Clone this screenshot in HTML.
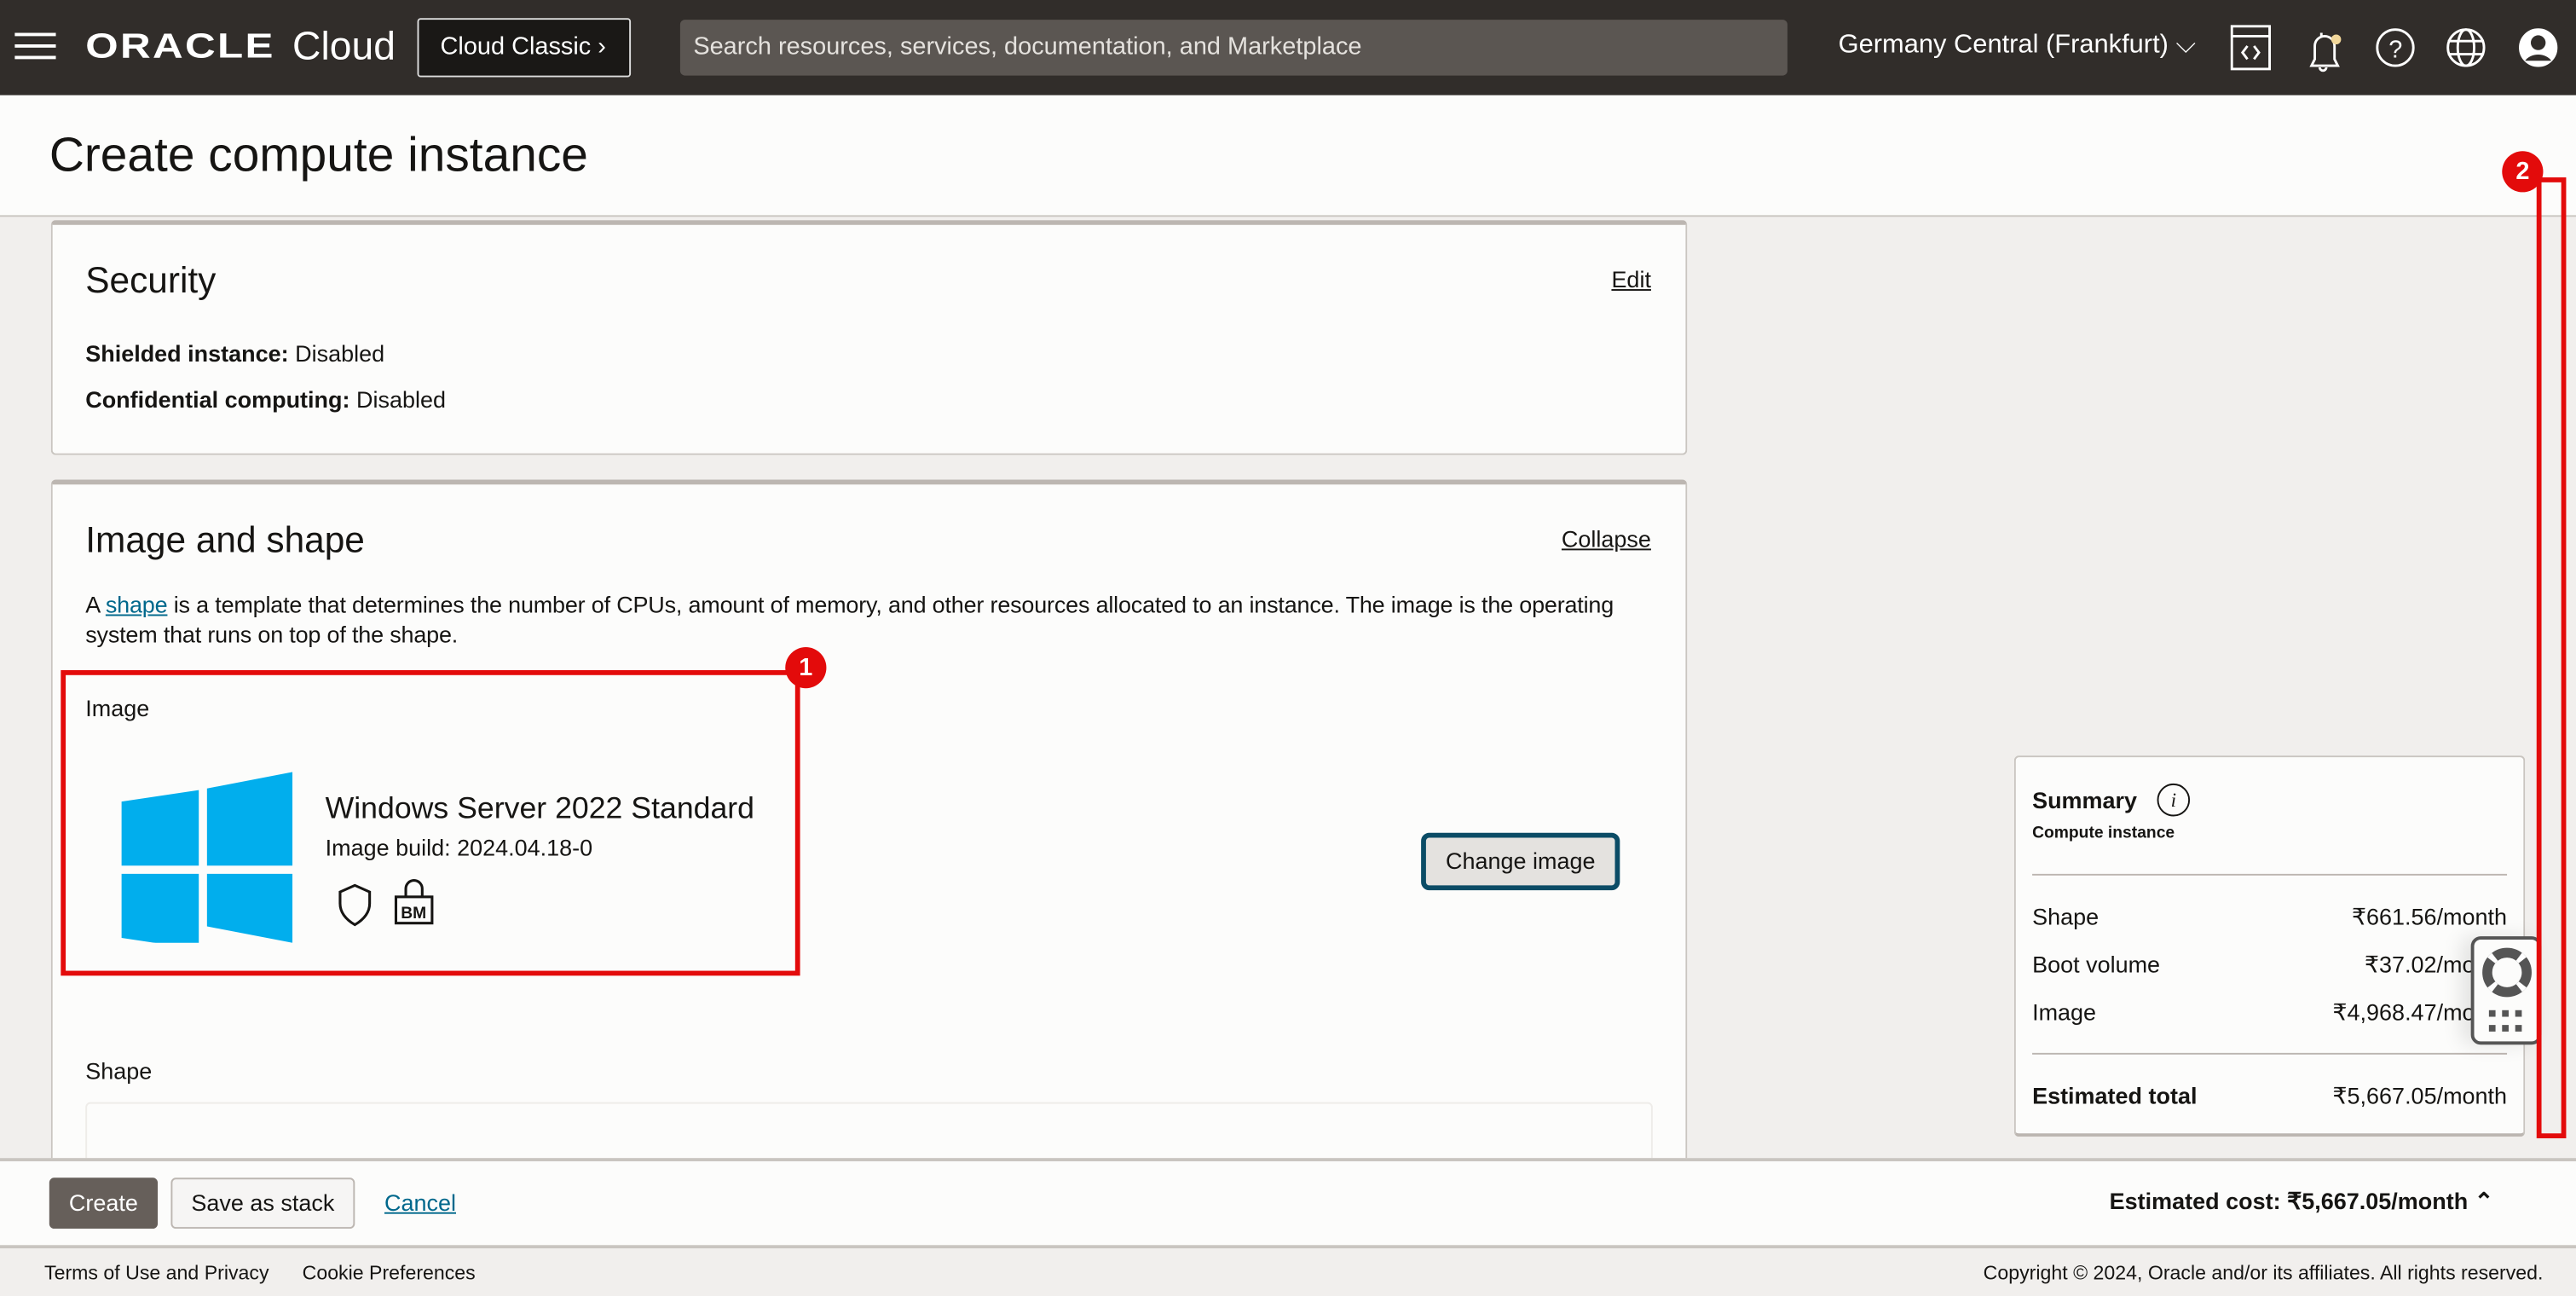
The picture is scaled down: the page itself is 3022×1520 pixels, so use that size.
<!DOCTYPE html>
<html><head><meta charset="utf-8"><style>
*{box-sizing:border-box;margin:0;padding:0}
html,body{width:3022px;height:1520px;overflow:hidden;background:#f1efed}
#s{position:absolute;left:0;top:0;width:1568px;height:789px;transform:scale(1.92730,1.92649);transform-origin:0 0;font-family:"Liberation Sans",sans-serif;color:#161513;background:#f1efed}
.a{position:absolute}
.hdr{left:0;top:0;width:1568px;height:58px;background:#312d2a}
.card{background:#fcfcfb;border:1px solid #c9c5c0;border-top:3px solid #bcb6b1;border-radius:3px}
u{text-decoration:underline}
</style></head><body><div id="s">
<div class="a hdr">
 <div class="a" style="left:9px;top:20px;width:25px;height:2px;background:#fff;box-shadow:0 7px 0 #fff,0 14px 0 #fff"></div>
 <div class="a" style="left:52px;top:17px;color:#fff;font-size:21px;font-weight:bold;letter-spacing:1px;transform:scaleX(1.22);transform-origin:0 0">ORACLE</div>
 <div class="a" style="left:178px;top:15px;color:#fff;font-size:24px">Cloud</div>
 <div class="a" style="left:254px;top:11px;width:130px;height:36px;background:#1a1816;border:1px solid #ddd;border-radius:2px;color:#fff;font-size:15px;line-height:34px;padding-left:13px">Cloud Classic ›</div>
 <div class="a" style="left:414px;top:12px;width:674px;height:34px;background:#5b5652;border-radius:3px;color:#e5e2de;font-size:15px;line-height:34px;padding-left:8px">Search resources, services, documentation, and Marketplace</div>
 <div class="a" style="left:1119px;top:19px;color:#fff;font-size:16px">Germany Central (Frankfurt) ⌵</div>
 <svg class="a" style="left:1350px;top:12px" width="215" height="34" viewBox="0 0 215 34" fill="none" stroke="#fff" stroke-width="1.5">
  <rect x="8.5" y="4" width="23" height="26"/><line x1="8.5" y1="10" x2="31.5" y2="10"/><path d="M18 16l-3 4 3 4M22 16l3 4-3 4"/>
  <path d="M57 28h16l-2-4v-8a6 6 0 0 0-12 0v8z M63 8v2 M62 29a2 2 0 0 0 4 0"/><circle cx="72" cy="12" r="3" fill="#f2d79a" stroke="none"/>
  <circle cx="108" cy="17" r="11"/><text x="104" y="23" fill="#fff" stroke="none" font-size="15" font-family="Liberation Sans">?</text>
  <circle cx="151" cy="17" r="11"/><ellipse cx="151" cy="17" rx="5" ry="11"/><line x1="140" y1="13" x2="162" y2="13"/><line x1="140" y1="21" x2="162" y2="21"/>
  <circle cx="195" cy="17" r="11" fill="#fff"/><circle cx="195" cy="14" r="4.5" fill="#312d2a" stroke="none"/><path d="M187 25a9 7 0 0 1 16 0" fill="#312d2a" stroke="none"/>
 </svg>
</div>
<div class="a" style="left:0;top:58px;width:1568px;height:74px;background:#fcfcfb;border-bottom:1px solid #c9c5c0"></div>
<div class="a" style="left:30px;top:78px;font-size:29.5px">Create compute instance</div>

<div class="a card" style="left:31px;top:134px;width:996px;height:143px">
 <div class="a" style="left:20px;top:21px;font-size:22px">Security</div>
 <div class="a" style="right:21px;top:25px;font-size:14px"><u>Edit</u></div>
 <div class="a" style="left:20px;top:70px;font-size:14px"><b>Shielded instance:</b> Disabled</div>
 <div class="a" style="left:20px;top:98px;font-size:14px"><b>Confidential computing:</b> Disabled</div>
</div>
<div class="a card" style="left:31px;top:292px;width:996px;height:430px">
 <div class="a" style="left:20px;top:21px;font-size:22px">Image and shape</div>
 <div class="a" style="right:21px;top:25px;font-size:14px"><u>Collapse</u></div>
 <div class="a" style="left:20px;top:64px;width:935px;font-size:14px;line-height:18px;letter-spacing:-0.1px">A <u style="color:#00688c">shape</u> is a template that determines the number of CPUs, amount of memory, and other resources allocated to an instance. The image is the operating system that runs on top of the shape.</div>
 <div class="a" style="left:20px;top:128px;font-size:14px">Image</div>
 <svg class="a" style="left:41px;top:175px" width="106" height="104" viewBox="0 0 106 104" fill="#01aeed"><path d="M1 18L48 11V57H1z M53 10L105 0V57H53z M1 62H48V108L1 101z M53 62H105V104L53 94z"/></svg>
 <div class="a" style="left:166px;top:186px;font-size:18.5px">Windows Server 2022 Standard</div>
 <div class="a" style="left:166px;top:213px;font-size:14px">Image build: 2024.04.18-0</div>
 <svg class="a" style="left:172px;top:240px" width="65" height="30" viewBox="0 0 65 30" fill="none" stroke="#161513" stroke-width="1.6"><path d="M12 4l-9 4v7c0 6 4 10 9 13 5-3 9-7 9-13V8z"/><rect x="37" y="11" width="22" height="16"/><path d="M43 11V6a5 5 0 0 1 10 0v5"/><text x="40" y="24" font-size="10" font-family="Liberation Sans" fill="#161513" stroke="none" font-weight="bold">BM</text></svg>
 <div class="a" style="left:833px;top:212px;width:121px;height:35px;background:#e4e2df;border:3px solid #0b4c66;border-radius:5px;font-size:14px;text-align:center;line-height:29px">Change image</div>
 <div class="a" style="left:20px;top:349px;font-size:14px">Shape</div>
 <div class="a" style="left:20px;top:376px;width:954px;height:60px;border:1px solid #eeece9;border-radius:3px"></div>
</div>

<div class="a" style="left:1226px;top:460px;width:311px;height:232px;background:#fcfcfb;border:1px solid #c9c5c0;border-bottom:2px solid #bcb6b1;border-radius:3px">
 <div class="a" style="left:10px;top:18px;font-size:14px;font-weight:bold">Summary</div>
 <div class="a" style="left:86px;top:16px;width:20px;height:20px;border:1.3px solid #161513;border-radius:50%;font-size:12px;font-style:italic;font-family:'Liberation Serif',serif;text-align:center;line-height:18px">i</div>
 <div class="a" style="left:10px;top:41px;font-size:10px;font-weight:bold">Compute instance</div>
 <div class="a" style="left:10px;top:71px;width:289px;height:1px;background:#bcb6b1"></div>
 <div class="a" style="left:10px;top:89px;font-size:14px">Shape</div><div class="a" style="right:10px;top:89px;font-size:14px">₹661.56/month</div>
 <div class="a" style="left:10px;top:118px;font-size:14px">Boot volume</div><div class="a" style="right:10px;top:118px;font-size:14px">₹37.02/month</div>
 <div class="a" style="left:10px;top:147px;font-size:14px">Image</div><div class="a" style="right:10px;top:147px;font-size:14px">₹4,968.47/month</div>
 <div class="a" style="left:10px;top:180px;width:289px;height:1px;background:#bcb6b1"></div>
 <div class="a" style="left:10px;top:198px;font-size:14px;font-weight:bold">Estimated total</div><div class="a" style="right:10px;top:198px;font-size:14px">₹5,667.05/month</div>
</div>
<div class="a" style="left:1504px;top:570px;width:43px;height:66px;background:#fcfcfb;border:2px solid #555;border-radius:6px;box-shadow:-6px 0 12px rgba(0,0,0,.1)">
 <svg class="a" style="left:4px;top:4px" width="32" height="56" viewBox="0 0 32 56"><circle cx="16" cy="16" r="12" fill="none" stroke="#555" stroke-width="6"/><circle cx="16" cy="16" r="12" fill="none" stroke="#fff" stroke-width="6" stroke-dasharray="3 15.8" stroke-dashoffset="-7.9"/><g fill="#555"><rect x="5" y="39" width="4" height="4"/><rect x="13" y="39" width="4" height="4"/><rect x="21" y="39" width="4" height="4"/><rect x="5" y="48" width="4" height="4"/><rect x="13" y="48" width="4" height="4"/><rect x="21" y="48" width="4" height="4"/></g></svg>
</div>

<div class="a" style="left:0;top:705px;width:1568px;height:55px;background:#fcfcfb;border-top:2px solid #c9c5c0;border-bottom:2px solid #c9c5c0"></div>
<div class="a" style="left:30px;top:717px;width:66px;height:31px;background:#665f5a;border-radius:3px;color:#fff;font-size:14px;text-align:center;line-height:31px">Create</div>
<div class="a" style="left:104px;top:717px;width:112px;height:31px;background:#f6f5f4;border:1px solid #bcb6b1;border-radius:3px;font-size:14px;text-align:center;line-height:29px">Save as stack</div>
<div class="a" style="left:234px;top:724px;font-size:14px;color:#00688c"><u>Cancel</u></div>
<div class="a" style="left:1284px;top:723px;font-size:14px;font-weight:bold">Estimated cost: ₹5,667.05/month ⌃</div>
<div class="a" style="left:27px;top:768px;font-size:12px">Terms of Use and Privacy</div>
<div class="a" style="left:184px;top:768px;font-size:12px">Cookie Preferences</div>
<div class="a" style="right:20px;top:768px;font-size:12px">Copyright © 2024, Oracle and/or its affiliates. All rights reserved.</div>

<div class="a" style="left:37px;top:408px;width:450px;height:186px;border:3px solid #e30b0b"></div>
<div class="a" style="left:478px;top:394px;width:25px;height:25px;border-radius:50%;background:#e30b0b;color:#fff;font-size:15px;font-weight:bold;text-align:center;line-height:25px">1</div>
<div class="a" style="left:1544px;top:108px;width:18px;height:585px;border:3px solid #e30b0b"></div>
<div class="a" style="left:1523px;top:92px;width:25px;height:25px;border-radius:50%;background:#e30b0b;color:#fff;font-size:15px;font-weight:bold;text-align:center;line-height:25px">2</div>
</div></body></html>
